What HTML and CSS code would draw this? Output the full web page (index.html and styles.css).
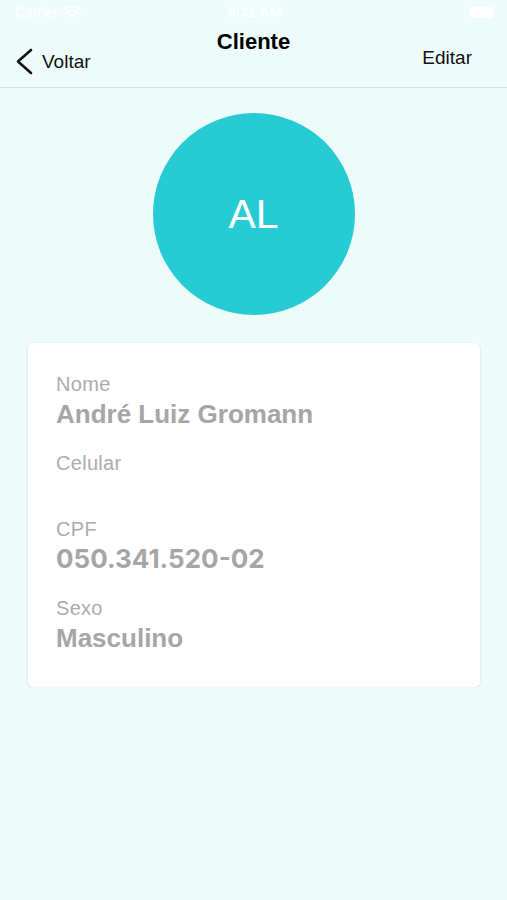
FILE: index.html
```html
<!DOCTYPE html>
<html lang="pt-BR">
<head>
    <meta charset="UTF-8">
    <meta name="viewport" content="width=device-width, initial-scale=1.0">
    <title>Cliente</title>
    <link rel="stylesheet" href="styles.css">
</head>
<body>
    <div class="statusBar">
        <div class="carrier">
            Carrier
            <svg class="wifi" width="20" height="14" viewBox="0 0 20 14">
                <path d="M1 5 Q10 -2 19 5" />
                <path d="M4 8 Q10 3 16 8" />
                <path d="M7 11 Q10 8.5 13 11" />
            </svg>
        </div>
        <div class="clock">9:31 AM</div>
        <div class="battery"></div>
    </div>

    <div class="navBar">
        <div class="backButton">
            <svg width="19" height="27" viewBox="0 0 19 27">
                <path d="M16 2 L3 13.5 L16 25" />
            </svg>
            <span>Voltar</span>
        </div>
        <h1 class="navTitle">Cliente</h1>
        <div class="editButton">Editar</div>
    </div>

    <div class="avatar">AL</div>

    <div class="card">
        <div class="field">
            <div class="label">Nome</div>
            <div class="value">André Luiz Gromann</div>
        </div>
        <div class="field">
            <div class="label">Celular</div>
            <div class="value empty"></div>
        </div>
        <div class="field">
            <div class="label">CPF</div>
            <div class="value digits">050.341.520-02</div>
        </div>
        <div class="field">
            <div class="label">Sexo</div>
            <div class="value">Masculino</div>
        </div>
    </div>
</body>
</html>
```

FILE: styles.css
```css
body {
    font-family: "Liberation Sans", Arial, sans-serif;
    margin: 0;
    padding: 0;
    background-color: #edfbfb;
    color: #111111;
}

/* строка статуса */
.statusBar {
    height: 24px;
    display: flex;
    justify-content: space-between;
    align-items: center;
    padding: 0 13px 0 15px;
    color: #ffffff;
    font-size: 14px;
    font-weight: bold;
}
.carrier {
    display: flex;
    align-items: center;
    gap: 4px;
    font-weight: normal;
    width: 90px;
}
.wifi path {
    fill: none;
    stroke: #ffffff;
    stroke-width: 2;
}
.clock {
    width: 90px;
    text-align: center;
}
.battery {
    width: 24px;
    height: 11px;
    border-radius: 3px;
    background-color: #ffffff;
    margin-left: 66px;
}

/* навигация */
.navBar {
    display: grid;
    grid-template-columns: 1fr auto 1fr;
    height: 63px;
    border-bottom: 1px solid #d3e0e0;
}
.backButton {
    display: flex;
    align-items: center;
    gap: 8px;
    align-self: start;
    margin-top: 24px;
    padding-left: 15px;
    font-size: 19px;
    line-height: 23px;
}
.backButton path {
    fill: none;
    stroke: #111111;
    stroke-width: 2.6;
    stroke-linecap: round;
    stroke-linejoin: round;
}
.navTitle {
    margin: 5px 0 0;
    font-size: 22px;
    line-height: 26px;
    font-weight: bold;
    color: #000000;
    align-self: start;
}
.editButton {
    justify-self: end;
    align-self: start;
    margin-top: 22px;
    padding-right: 35px;
    font-size: 19px;
    line-height: 23px;
}

/* аватар */
.avatar {
    width: 202px;
    height: 202px;
    margin: 25px auto 28px;
    border-radius: 50%;
    background-color: #27cbd3;
    color: #ffffff;
    display: flex;
    align-items: center;
    justify-content: center;
    font-size: 41px;
}

/* карточка */
.card {
    margin: 0 27px 0 28px;
    padding: 29px 28px 31px;
    background-color: #ffffff;
    border-radius: 5px;
    box-shadow: 0 1px 3px rgba(0, 0, 0, 0.13);
}
.field {
    margin-bottom: 19px;
}
.field:last-child {
    margin-bottom: 0;
}
.label {
    font-size: 20px;
    line-height: 24px;
    letter-spacing: 0.3px;
    color: #acacac;
}
.value {
    font-size: 26px;
    line-height: 36px;
    font-weight: bold;
    color: #a6a6a6;
}
.value.empty {
    height: 23px;
}
.value.digits {
    font-family: Inter, "Liberation Sans", sans-serif;
}
```
